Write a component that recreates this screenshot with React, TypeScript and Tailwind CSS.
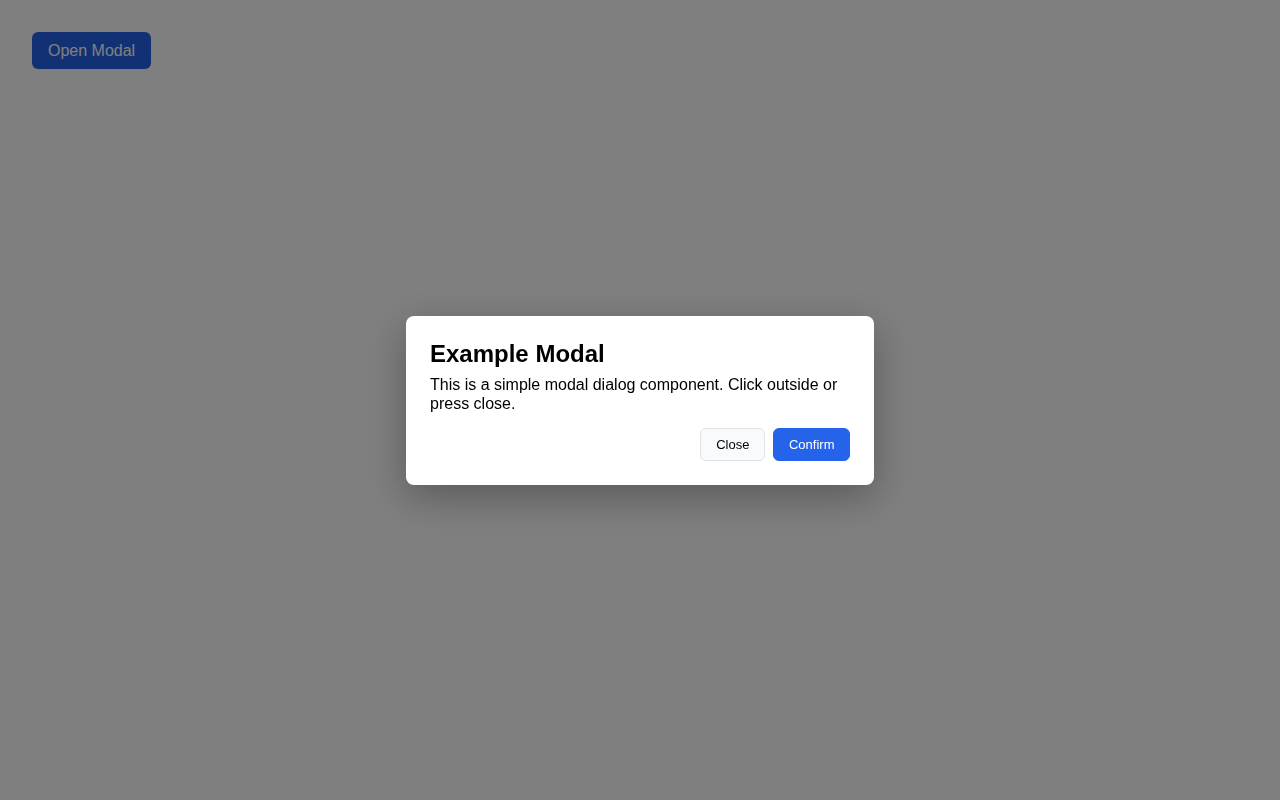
import React, { useState } from 'react';

const App: React.FC = () => {
    const [open, setOpen] = useState(true);

    return (
        <div className="relative min-h-screen bg-white font-['Liberation_Sans',Arial,sans-serif] text-black">
            <div className="p-8">
                <button
                    onClick={() => setOpen(true)}
                    className="rounded-md bg-[#2563eb] px-4 py-2 text-base leading-[21px] text-white"
                >
                    Open Modal
                </button>
            </div>

            {open && (
                <div
                    className="fixed inset-0 z-50 flex items-center justify-center bg-[rgba(0,0,0,0.5)]"
                    onClick={() => setOpen(false)}
                >
                    {/* Dialog */}
                    <div
                        className="w-[468px] rounded-lg bg-white p-6 shadow-[0_12px_40px_rgba(0,0,0,0.3)]"
                        onClick={(e) => e.stopPropagation()}
                    >
                        <h2 className="text-2xl font-bold leading-[28px]">Example Modal</h2>
                        <p className="mt-[7px] text-base leading-[19px]">
                            This is a simple modal dialog component. Click outside or press close.
                        </p>
                        <div className="mt-[15px] flex justify-end gap-2">
                            <button
                                onClick={() => setOpen(false)}
                                className="rounded-md border border-[#dfe3e8] bg-[#f8fafc] px-[15px] py-2 text-[13px] leading-[15px]"
                            >
                                Close
                            </button>
                            <button
                                onClick={() => setOpen(false)}
                                className="rounded-md border border-[#2563eb] bg-[#2563eb] px-[14.5px] py-2 text-[13px] leading-[15px] text-white"
                            >
                                Confirm
                            </button>
                        </div>
                    </div>
                </div>
            )}
        </div>
    );
};

export default App;
